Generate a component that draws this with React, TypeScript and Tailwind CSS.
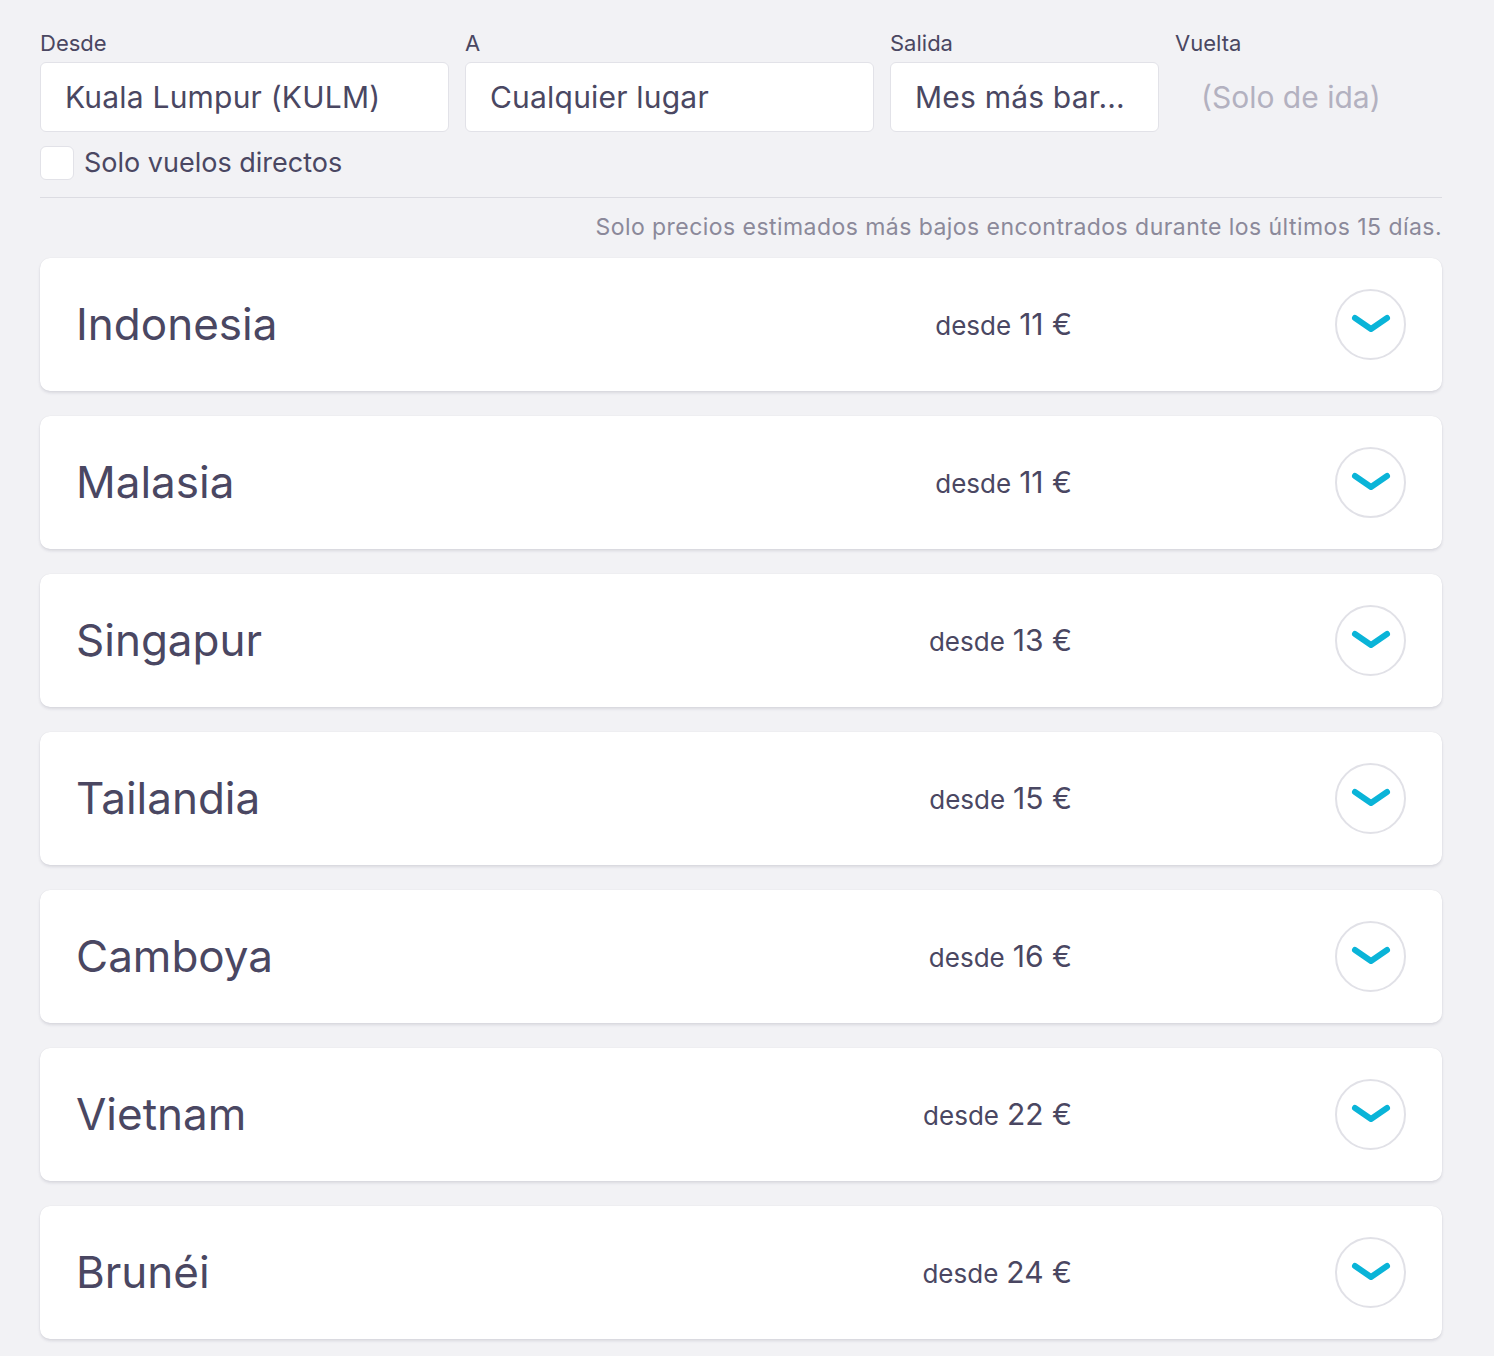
import React from 'react';

const countries = [
  { name: 'Indonesia', price: 11 },
  { name: 'Malasia', price: 11 },
  { name: 'Singapur', price: 13 },
  { name: 'Tailandia', price: 15 },
  { name: 'Camboya', price: 16 },
  { name: 'Vietnam', price: 22 },
  { name: 'Brunéi', price: 24 },
];

const Field: React.FC<{ label: string; value: string; width: string }> = ({ label, value, width }) => (
  <div className={`flex flex-col ${width}`}>
    <label className="text-[22px] leading-[26px] h-[36px] pt-[4px]">{label}</label>
    <div className="h-[70px] bg-white border border-[#e2e2e8] rounded-[6px] flex items-center px-[24px] text-[30px] tracking-[0.2px] whitespace-nowrap overflow-hidden">
      {value}
    </div>
  </div>
);

export default function App() {
  return (
    <div
      className="min-h-screen bg-[#f2f2f5] text-[#4a4762] px-[40px] pt-[26px] pb-[20px]"
      style={{ fontFamily: 'Inter, "Noto Sans", sans-serif' }}
    >
      <div className="w-[1402px]">
        {/* search fields */}
        <div className="flex gap-[16px]">
          <Field label="Desde" value="Kuala Lumpur (KULM)" width="w-[409px]" />
          <Field label="A" value="Cualquier lugar" width="w-[409px]" />
          <Field label="Salida" value="Mes más bar..." width="w-[269px]" />
          <div className="flex flex-col flex-1">
            <label className="text-[22px] leading-[26px] h-[36px] pt-[4px]">Vuelta</label>
            <div className="h-[70px] flex items-center px-[26px] text-[30px] text-[#b3b1c0]">(Solo de ida)</div>
          </div>
        </div>

        <div className="flex items-center gap-[10px] mt-[14px]">
          <div className="w-[34px] h-[34px] bg-white border border-[#e2e2e8] rounded-[6px]" />
          <span className="text-[27px] leading-[34px]">Solo vuelos directos</span>
        </div>

        <div className="border-t border-[#dcdce2] mt-[17px]" />

        <p className="text-right text-[23px] text-[#8b899a] mt-[12px] mb-[13px] tracking-[0.45px]">
          Solo precios estimados más bajos encontrados durante los últimos 15 días.
        </p>

        {/* results */}
        <div className="flex flex-col gap-[25px]">
          {countries.map((c) => (
            <div
              key={c.name}
              className="h-[133px] bg-white rounded-[10px] flex items-center pl-[36px] pr-[36px] shadow-[0_2px_3px_rgba(40,40,70,0.12),0_0_1px_rgba(40,40,70,0.12)]"
            >
              <div className="flex-1 text-[44px] leading-none">{c.name}</div>
              <div className="whitespace-nowrap flex items-baseline">
                <span className="text-[26px]">desde</span>
                <span className="text-[30px] ml-[8px]">{c.price} €</span>
              </div>
              <div className="ml-[263px] w-[71px] h-[71px] rounded-full border-[2px] border-[#e1e1e7] flex items-center justify-center">
                <svg width="40" height="22" viewBox="0 0 40 22" fill="none" stroke="#0ab4d8" strokeWidth="6" strokeLinecap="round" strokeLinejoin="round">
                  <polyline points="4 5 20 16 36 5" />
                </svg>
              </div>
            </div>
          ))}
        </div>
      </div>
    </div>
  );
}
